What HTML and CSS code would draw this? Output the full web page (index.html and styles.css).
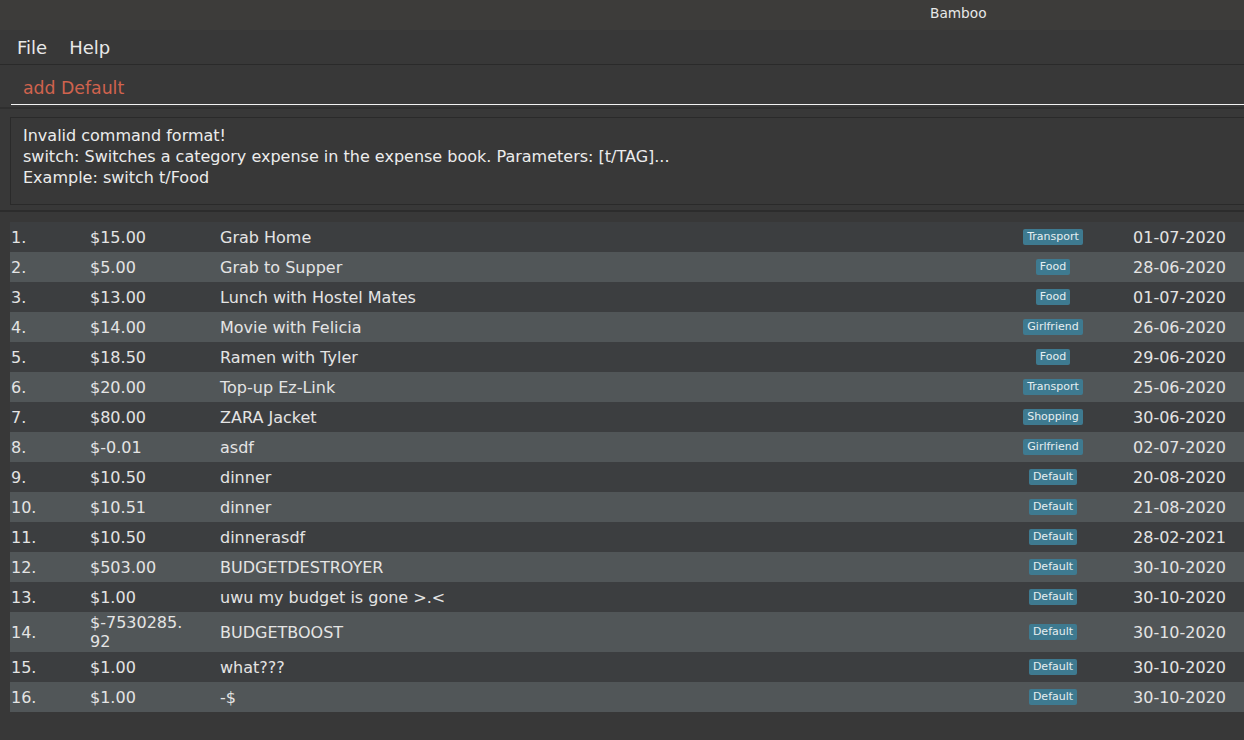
FILE: index.html
```html
<!DOCTYPE html>
<html>
<head>
<meta charset="utf-8">
<title>Bamboo</title>
<link rel="stylesheet" href="styles.css">
</head>
<body>
<div class="titlebar"><span class="title">Bamboo</span></div>
<div class="menubar">
  <span class="menu-item">File</span>
  <span class="menu-item">Help</span>
</div>
<div class="command">
  <div class="command-field">add Default</div>
</div>
<div class="result">
  <div>Invalid command format!</div>
  <div>switch: Switches a category expense in the expense book. Parameters: [t/TAG]...</div>
  <div>Example: switch t/Food</div>
</div>
<div class="separator"></div>
<div class="list">
  <div class="row"><span class="idx">1.</span><span class="amt">$15.00</span><span class="desc">Grab Home</span><span class="tagcell"><span class="tag">Transport</span></span><span class="date">01-07-2020</span></div>
  <div class="row alt"><span class="idx">2.</span><span class="amt">$5.00</span><span class="desc">Grab to Supper</span><span class="tagcell"><span class="tag">Food</span></span><span class="date">28-06-2020</span></div>
  <div class="row"><span class="idx">3.</span><span class="amt">$13.00</span><span class="desc">Lunch with Hostel Mates</span><span class="tagcell"><span class="tag">Food</span></span><span class="date">01-07-2020</span></div>
  <div class="row alt"><span class="idx">4.</span><span class="amt">$14.00</span><span class="desc">Movie with Felicia</span><span class="tagcell"><span class="tag">Girlfriend</span></span><span class="date">26-06-2020</span></div>
  <div class="row"><span class="idx">5.</span><span class="amt">$18.50</span><span class="desc">Ramen with Tyler</span><span class="tagcell"><span class="tag">Food</span></span><span class="date">29-06-2020</span></div>
  <div class="row alt"><span class="idx">6.</span><span class="amt">$20.00</span><span class="desc">Top-up Ez-Link</span><span class="tagcell"><span class="tag">Transport</span></span><span class="date">25-06-2020</span></div>
  <div class="row"><span class="idx">7.</span><span class="amt">$80.00</span><span class="desc">ZARA Jacket</span><span class="tagcell"><span class="tag">Shopping</span></span><span class="date">30-06-2020</span></div>
  <div class="row alt"><span class="idx">8.</span><span class="amt">$-0.01</span><span class="desc">asdf</span><span class="tagcell"><span class="tag">Girlfriend</span></span><span class="date">02-07-2020</span></div>
  <div class="row"><span class="idx">9.</span><span class="amt">$10.50</span><span class="desc">dinner</span><span class="tagcell"><span class="tag">Default</span></span><span class="date">20-08-2020</span></div>
  <div class="row alt"><span class="idx">10.</span><span class="amt">$10.51</span><span class="desc">dinner</span><span class="tagcell"><span class="tag">Default</span></span><span class="date">21-08-2020</span></div>
  <div class="row"><span class="idx">11.</span><span class="amt">$10.50</span><span class="desc">dinnerasdf</span><span class="tagcell"><span class="tag">Default</span></span><span class="date">28-02-2021</span></div>
  <div class="row alt"><span class="idx">12.</span><span class="amt">$503.00</span><span class="desc">BUDGETDESTROYER</span><span class="tagcell"><span class="tag">Default</span></span><span class="date">30-10-2020</span></div>
  <div class="row"><span class="idx">13.</span><span class="amt">$1.00</span><span class="desc">uwu my budget is gone &gt;.&lt;</span><span class="tagcell"><span class="tag">Default</span></span><span class="date">30-10-2020</span></div>
  <div class="row alt"><span class="idx">14.</span><span class="amt">$-7530285.92</span><span class="desc">BUDGETBOOST</span><span class="tagcell"><span class="tag">Default</span></span><span class="date">30-10-2020</span></div>
  <div class="row"><span class="idx">15.</span><span class="amt">$1.00</span><span class="desc">what???</span><span class="tagcell"><span class="tag">Default</span></span><span class="date">30-10-2020</span></div>
  <div class="row alt"><span class="idx">16.</span><span class="amt">$1.00</span><span class="desc">-$</span><span class="tagcell"><span class="tag">Default</span></span><span class="date">30-10-2020</span></div>
</div>
</body>
</html>
```
FILE: styles.css
```css
html, body {
  margin: 0;
  padding: 0;
}
body {
  background: #383838;
  font-family: "DejaVu Sans", "Liberation Sans", sans-serif;
  color: #e6e6e6;
  width: 1244px;
  height: 740px;
  overflow: hidden;
}
.titlebar {
  height: 30px;
  background: #3d3c3a;
  display: flex;
  align-items: center;
  padding-left: 930px;
  box-sizing: border-box;
}
.title {
  font-size: 13.7px;
  color: #e8e8e8;
  line-height: 16px;
  margin-top: -5px;
}
.menubar {
  height: 34px;
  background: #383838;
  border-bottom: 1px solid #2a2a2a;
  display: flex;
  align-items: center;
  padding-left: 17px;
  gap: 22px;
}
.menu-item {
  font-size: 18px;
  color: #e8e8e8;
  line-height: 22px;
  margin-top: 1px;
}
.command {
  height: 42px;
  border-bottom: 2px solid #2f2f2f;
}
.command-field {
  margin-left: 11px;
  border-bottom: 1px solid #f2f2f2;
  padding-left: 12px;
  padding-top: 6px;
  height: 33px;
  font-size: 17.3px;
  line-height: 20px;
  color: #d0634e;
  display: flex;
  align-items: center;
}
.result {
  margin: 8px -20px 0 10px;
  height: 88px;
  border: 1px solid #2a2a2a;
  padding: 7px 12px 0 12px;
  box-sizing: border-box;
  font-size: 16px;
  line-height: 21px;
  color: #ececec;
}
.separator {
  margin-top: 5px;
  height: 2px;
  background: #2c2c2c;
}
.list {
  margin-top: 10px;
  margin-left: 10px;
}
.row {
  display: grid;
  grid-template-columns: 80px 130px 1fr 100px 123px;
  padding: 1px 18px 1px 0;
  box-sizing: border-box;
  align-items: center;
  min-height: 30px;
  background: #3c3e40;
  font-size: 16px;
  line-height: 19px;
  color: #e4e4e4;
}
.row.alt {
  background: #515658;
}
.idx {
  padding-left: 1px;
}
.amt {
  max-width: 96px;
  word-break: break-all;
}
.tagcell {
  display: flex;
  justify-content: center;
}
.tag {
  background: #3e7a90;
  color: #e6eef0;
  font-size: 11px;
  line-height: 16px;
  padding: 0 4px;
  border-radius: 2px;
}
.date {
  text-align: right;
}
```
